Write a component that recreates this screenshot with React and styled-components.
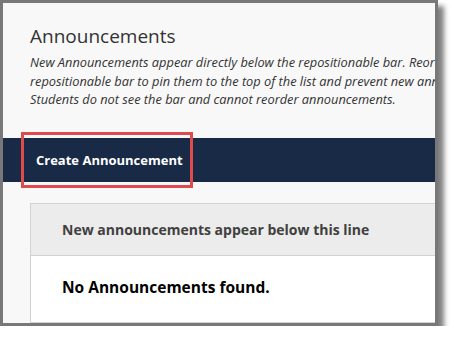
import React from "react";
import styled, { createGlobalStyle } from "styled-components";

const GlobalStyle = createGlobalStyle`
  html, body {
    margin: 0;
    padding: 0;
    background: #ffffff;
  }
  body {
    font-family: "Open Sans", "DejaVu Sans", sans-serif;
  }
`;

const Frame = styled.div`
  box-sizing: content-box;
  width: 432px;
  height: 320px;
  border: 3px solid #787878;
  box-shadow: 6px 6px 5px rgba(0, 0, 0, 0.5);
  background: #f8f8f8;
  overflow: hidden;
  display: flex;
  flex-direction: column;
`;

const Intro = styled.header`
  padding: 20px 0 0 27px;
`;

const Title = styled.h1`
  margin: 0;
  font-size: 19px;
  line-height: 26px;
  font-weight: 400;
  color: #333333;
`;

const Description = styled.p`
  margin: 4px 0 0;
  font-size: 12.8px;
  line-height: 18.5px;
  font-style: italic;
  color: #333333;
  white-space: nowrap;
`;

const ActionBar = styled.nav`
  margin-top: 29.5px;
  height: 44px;
  flex: none;
  background: #192a47;
  display: flex;
  align-items: stretch;
`;

const ActionButton = styled.button`
  position: relative;
  margin-left: 18px;
  padding: 0 10px 0 15px;
  border: none;
  background: transparent;
  color: #ffffff;
  font-family: "Open Sans", "DejaVu Sans", sans-serif;
  font-size: 13px;
  font-weight: 700;
  display: flex;
  align-items: center;
  cursor: pointer;

  &::after {
    content: "";
    position: absolute;
    left: 0;
    right: 0;
    top: -6px;
    bottom: -6px;
    border: 3px solid #e04a4c;
    pointer-events: none;
  }
`;

const Panel = styled.section`
  margin: 21px -40px 0 27px;
  border: 1px solid #d2d2d2;
  background: #ffffff;
  flex: 1;
`;

const PanelHeader = styled.div`
  height: 51px;
  background: #ececec;
  border-bottom: 1px solid #d2d2d2;
  display: flex;
  align-items: center;
  padding-left: 31px;
  font-size: 14px;
  font-weight: 700;
  color: #404040;
`;

const EmptyMessage = styled.div`
  padding: 19px 0 0 31px;
  font-size: 15.5px;
  line-height: 24px;
  font-weight: 700;
  color: #000000;
`;

export default function App() {
  return (
    <>
      <GlobalStyle />
      <Frame>
        <Intro>
          <Title>Announcements</Title>
          <Description>
            New Announcements appear directly below the repositionable bar. Reorder announcements above the
            <br />
            repositionable bar to pin them to the top of the list and prevent new announcements from appearing above them.
            <br />
            Students do not see the bar and cannot reorder announcements.
          </Description>
        </Intro>
        <ActionBar>
          <ActionButton type="button">Create Announcement</ActionButton>
        </ActionBar>
        <Panel>
          <PanelHeader>New announcements appear below this line</PanelHeader>
          <EmptyMessage>No Announcements found.</EmptyMessage>
        </Panel>
      </Frame>
    </>
  );
}
